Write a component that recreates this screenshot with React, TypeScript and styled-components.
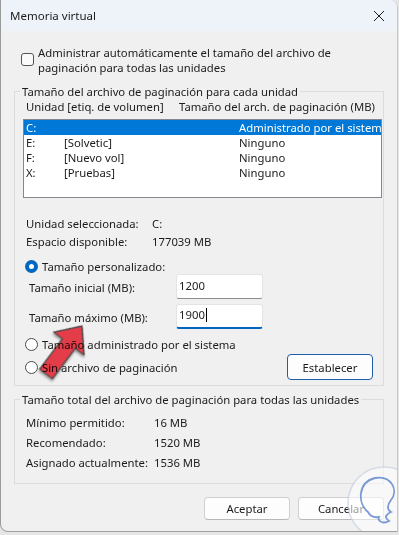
import styled, { createGlobalStyle } from "styled-components";

const GlobalStyle = createGlobalStyle`
  html, body {
    margin: 0;
    padding: 0;
    background: #e6e6e6;
  }
  body {
    font-family: "Noto Sans", "Liberation Sans", sans-serif;
    font-size: 11.3px;
    color: #1b1b1b;
  }
`;

const drives = [
  { drive: "C:", label: "", size: "Administrado por el sistem", selected: true },
  { drive: "E:", label: "[Solvetic]", size: "Ninguno", selected: false },
  { drive: "F:", label: "[Nuevo vol]", size: "Ninguno", selected: false },
  { drive: "X:", label: "[Pruebas]", size: "Ninguno", selected: false },
];

const totals = [
  { label: "Mínimo permitido:", value: "16 MB" },
  { label: "Recomendado:", value: "1520 MB" },
  { label: "Asignado actualmente:", value: "1536 MB" },
];

export default function App() {
  return (
    <>
      <GlobalStyle />
      <Window>
        <TitleBar>
          <Title>Memoria virtual</Title>
          <CloseIcon width="12" height="12" viewBox="0 0 12 12">
            <path d="M1 1 L11 11 M11 1 L1 11" stroke="#1b1b1b" strokeWidth="1" fill="none" />
          </CloseIcon>
        </TitleBar>

        <Body>
          <CheckRow>
            <CheckBox />
            <CheckText>
              Administrar automáticamente el tamaño del archivo de
              <br />
              paginación para todas las unidades
            </CheckText>
          </CheckRow>

          <Group $top={9}>
            <Legend>Tamaño del archivo de paginación para cada unidad</Legend>
            <HeaderRow>
              <span>Unidad [etiq. de volumen]</span>
              <span>Tamaño del arch. de paginación (MB)</span>
            </HeaderRow>
            <ListBox>
              {drives.map((d) => (
                <DriveRow key={d.drive} $selected={d.selected}>
                  <span>{d.drive}</span>
                  <span>{d.label}</span>
                  <span>{d.size}</span>
                </DriveRow>
              ))}
            </ListBox>

            <InfoGrid>
              <span>Unidad seleccionada:</span>
              <span>C:</span>
              <span>Espacio disponible:</span>
              <span>177039 MB</span>
            </InfoGrid>

            <RadioRow $top={6}>
              <Radio $checked />
              <span>Tamaño personalizado:</span>
            </RadioRow>

            <FieldRow>
              <FieldLabel>Tamaño inicial (MB):</FieldLabel>
              <TextBox>1200</TextBox>
            </FieldRow>
            <FieldRow $top={5}>
              <FieldLabel>Tamaño máximo (MB):</FieldLabel>
              <TextBox $focused>
                1900
                <Caret />
              </TextBox>
            </FieldRow>

            <RadioRow $top={6}>
              <Radio />
              <span>Tamaño administrado por el sistema</span>
            </RadioRow>
            <LastRow>
              <RadioRow $top={0}>
                <Radio />
                <span>Sin archivo de paginación</span>
              </RadioRow>
              <SetButton>Establecer</SetButton>
            </LastRow>
          </Group>

          <Group $top={6} $bottom={10}>
            <Legend>Tamaño total del archivo de paginación para todas las unidades</Legend>
            <TotalsGrid>
              {totals.map((t) => (
                <TotalPair key={t.label}>
                  <span>{t.label}</span>
                  <span>{t.value}</span>
                </TotalPair>
              ))}
            </TotalsGrid>
          </Group>

          <Footer>
            <DialogButton>Aceptar</DialogButton>
            <DialogButton>Cancelar</DialogButton>
          </Footer>
        </Body>

        <Annotation width="398" height="532" viewBox="0 0 398 532">
          <g transform="translate(81 326) rotate(36.87)" style={{ mixBlendMode: "multiply" }}>
            <polygon
              points="0,0 -19,22 -8,22 -8,60 8,60 8,22 19,22"
              fill="#f2414d"
              stroke="#4a4a4a"
              strokeWidth="1.2"
              strokeLinejoin="round"
              style={{ filter: "drop-shadow(1px 2px 1px rgba(0,0,0,0.35))" }}
            />
          </g>
          <circle cx="383" cy="503" r="36" fill="rgba(255,255,255,0.55)" stroke="rgba(190,200,220,0.6)" strokeWidth="1.5" />
          <path
            d="M367 512 C356 503 357 482 374 478 C390 475 398 490 390 500 C386 505 386 510 390 512 C386 514 382 517 388 521 C383 524 376 522 378 517 C372 518 369 516 367 512"
            fill="none"
            stroke="rgba(80,120,200,0.75)"
            strokeWidth="1.8"
            strokeLinecap="round"
          />
        </Annotation>
      </Window>
    </>
  );
}

const Window = styled.div`
  position: relative;
  width: 398px;
  height: 532px;
  box-sizing: border-box;
  background: #f0f0f0;
  border-left: 1px solid #9a9a9a;
  border-right: 1px solid #c8c8c8;
  border-bottom: 1px solid #a0a0a0;
  border-radius: 0 8px 0 8px;
  overflow: hidden;
  white-space: nowrap;
  isolation: isolate;
`;

const TitleBar = styled.div`
  height: 31px;
  display: flex;
  align-items: center;
  justify-content: space-between;
  padding: 0 12px 0 9px;
  background: #eef3fa;
`;

const Title = styled.span`
  font-size: 11.5px;
`;

const CloseIcon = styled.svg`
  display: block;
`;

const Body = styled.div`
  padding: 0 13px 0 13px;
  display: flex;
  flex-direction: column;
`;

const CheckRow = styled.div`
  display: flex;
  align-items: flex-start;
  margin-top: 14px;
  line-height: 15px;
`;

const CheckBox = styled.div`
  width: 13px;
  height: 13px;
  box-sizing: border-box;
  margin: 8px 4px 0 7px;
  border: 1px solid #555;
  border-radius: 3px;
  background: #fbfbfb;
`;

const CheckText = styled.div``;

const Group = styled.fieldset<{ $top?: number; $bottom?: number }>`
  margin: ${(p) => p.$top ?? 8}px 0 0 0;
  padding: 0 0 ${(p) => p.$bottom ?? 5}px 0;
  width: 370px;
  box-sizing: border-box;
  border: 1px solid #dcdcdc;
  min-inline-size: 0;
`;

const Legend = styled.legend`
  margin-left: 5px;
  padding: 0 2px;
  line-height: 15px;
`;

const HeaderRow = styled.div`
  display: grid;
  grid-template-columns: 153px auto;
  margin-left: 11px;
  line-height: 15px;
`;

const ListBox = styled.div`
  margin: 5px 0 0 8px;
  width: 359px;
  height: 79px;
  box-sizing: border-box;
  border: 1px solid #828790;
  background: #fff;
  overflow: hidden;
`;

const DriveRow = styled.div<{ $selected?: boolean }>`
  display: grid;
  grid-template-columns: 38px 175px 1fr;
  height: 15px;
  line-height: 15px;
  padding-left: 2px;
  overflow: hidden;
  background: ${(p) => (p.$selected ? "#0078d7" : "transparent")};
  color: ${(p) => (p.$selected ? "#fff" : "#1b1b1b")};

  & > span {
    overflow: hidden;
  }
`;

const InfoGrid = styled.div`
  display: grid;
  grid-template-columns: 126px auto;
  margin: 17px 0 0 11px;
  line-height: 18px;
`;

const RadioRow = styled.div<{ $top?: number }>`
  display: flex;
  align-items: center;
  gap: 4px;
  margin: ${(p) => p.$top ?? 0}px 0 0 10px;
  height: 18px;
`;

const Radio = styled.div<{ $checked?: boolean }>`
  width: 13px;
  height: 13px;
  box-sizing: border-box;
  border-radius: 50%;
  background: #fff;
  border: ${(p) => (p.$checked ? "4px solid #0067c0" : "1px solid #4a4a4a")};
`;

const FieldRow = styled.div<{ $top?: number }>`
  display: flex;
  align-items: flex-start;
  margin: ${(p) => p.$top ?? -1}px 0 0 14px;
`;

const FieldLabel = styled.span`
  width: 147px;
  padding-top: 6px;
  line-height: 15px;
`;

const TextBox = styled.div<{ $focused?: boolean }>`
  display: flex;
  align-items: center;
  width: 87px;
  height: 25px;
  box-sizing: border-box;
  padding: 0 0 3px 2px;
  background: #fff;
  border: 1px solid #e4e4e4;
  border-bottom: ${(p) => (p.$focused ? "2px solid #0067c0" : "1px solid #8d8d8d")};
  border-radius: 3px;
`;

const Caret = styled.span`
  width: 1px;
  height: 14px;
  margin-left: 1px;
  background: #000;
`;

const LastRow = styled.div`
  display: flex;
  align-items: center;
  justify-content: space-between;
  margin-top: 1px;
  padding-right: 10px;
`;

const SetButton = styled.div`
  width: 86px;
  height: 26px;
  box-sizing: border-box;
  display: flex;
  align-items: center;
  justify-content: center;
  background: #fdfdfd;
  border: 1px solid #1f5fa8;
  border-radius: 4px;
`;

const TotalsGrid = styled.div`
  margin: 6px 0 0 11px;
  display: flex;
  flex-direction: column;
`;

const TotalPair = styled.div`
  display: grid;
  grid-template-columns: 128px auto;
  line-height: 20px;
`;

const Footer = styled.div`
  display: flex;
  justify-content: flex-end;
  gap: 8px;
  margin-top: 13px;
`;

const DialogButton = styled.div`
  width: 86px;
  height: 23px;
  box-sizing: border-box;
  display: flex;
  align-items: center;
  justify-content: center;
  background: #fdfdfd;
  border: 1px solid #d0d0d0;
  border-bottom-color: #b8b8b8;
  border-radius: 4px;
`;

const Annotation = styled.svg`
  position: absolute;
  left: 0;
  top: 0;
  pointer-events: none;
`;
